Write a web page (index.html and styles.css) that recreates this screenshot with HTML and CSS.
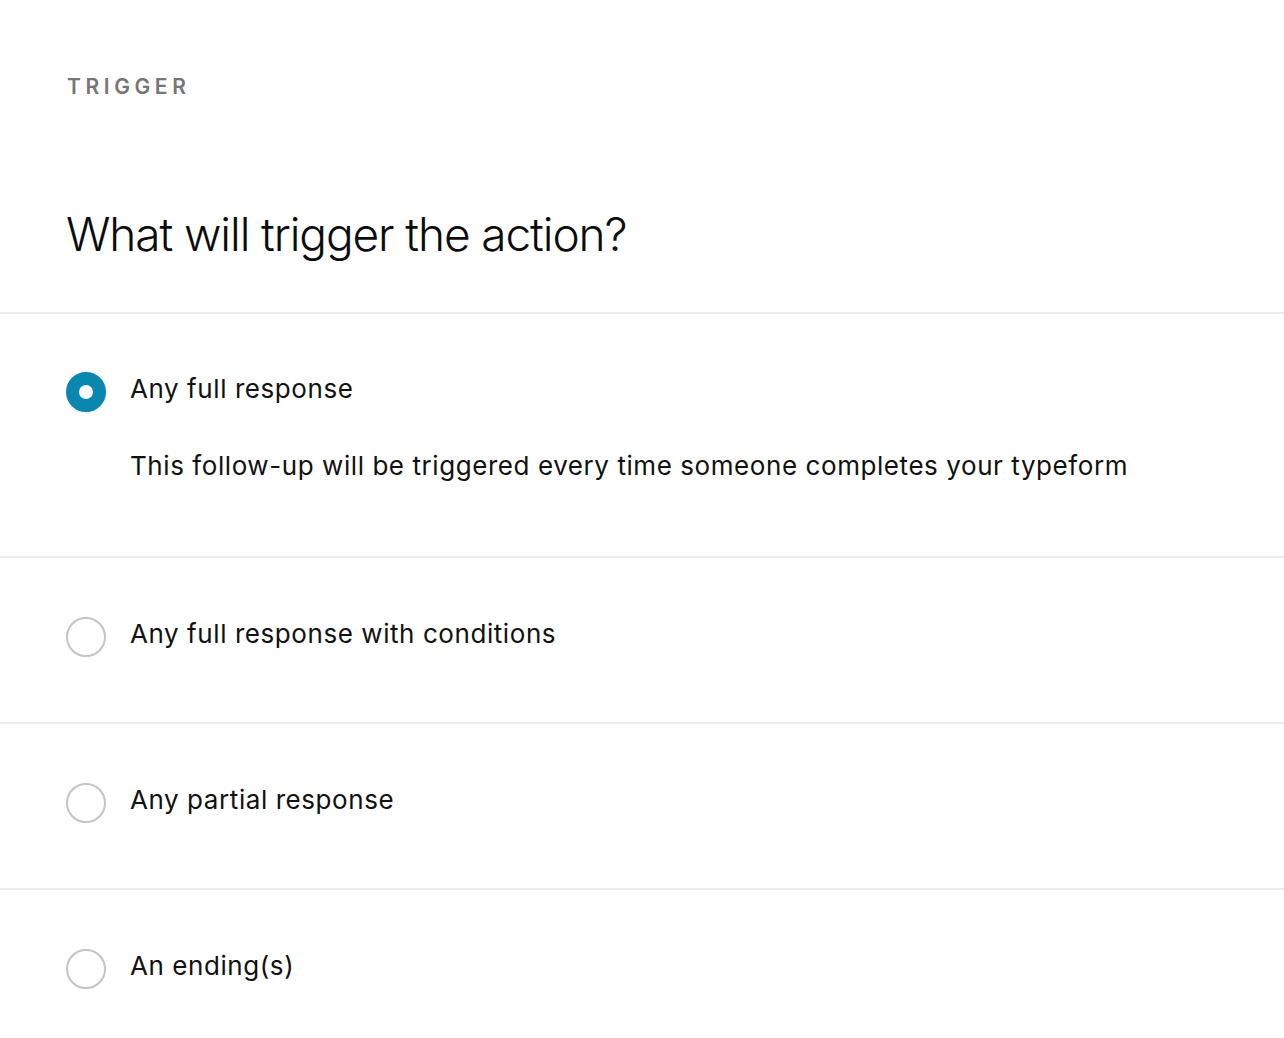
FILE: index.html
```html
<!DOCTYPE html>
<html lang="en">
<head>
    <meta charset="UTF-8">
    <meta name="viewport" content="width=device-width, initial-scale=1.0">
    <title>Trigger</title>
    <link rel="stylesheet" href="styles.css">
</head>
<body>
    <div class="header">
        <div class="eyebrow">TRIGGER</div>
        <h1 class="title">What will trigger the action?</h1>
    </div>

    <div class="options">
        <label class="option first">
            <span class="radio checked"></span>
            <span class="option-body">
                <span class="option-label">Any full response</span>
                <span class="option-desc">This follow-up will be triggered every time someone completes your typeform</span>
            </span>
        </label>
        <label class="option">
            <span class="radio"></span>
            <span class="option-body">
                <span class="option-label">Any full response with conditions</span>
            </span>
        </label>
        <label class="option">
            <span class="radio"></span>
            <span class="option-body">
                <span class="option-label">Any partial response</span>
            </span>
        </label>
        <label class="option">
            <span class="radio"></span>
            <span class="option-body">
                <span class="option-label">An ending(s)</span>
            </span>
        </label>
    </div>
</body>
</html>
```

FILE: styles.css
```css
body {
    margin: 0;
    padding: 0;
    font-family: 'Inter', 'Noto Sans', sans-serif;
    background: #ffffff;
    color: #111111;
    overflow: hidden;
}

.header {
    padding: 75px 67px 50px;
    border-bottom: 2px solid #ececec;
}

.eyebrow {
    font-size: 21px;
    line-height: 24px;
    font-weight: 600;
    letter-spacing: 4.6px;
    color: #767676;
}

.title {
    margin: 107px 0 0 -1px;
    font-size: 46px;
    line-height: 56px;
    font-weight: 300;
    color: #0c0c0c;
    letter-spacing: -1.1px;
}

.option {
    display: flex;
    align-items: flex-start;
    gap: 24px;
    padding: 59px 66px 65px;
    border-bottom: 2px solid #ececec;
    cursor: pointer;
}

.option.first {
    padding-top: 58px;
    padding-bottom: 73px;
}

.radio {
    flex: none;
    width: 40px;
    height: 40px;
    border-radius: 50%;
    border: 2px solid #c4c4c4;
    box-sizing: border-box;
    display: flex;
    align-items: center;
    justify-content: center;
}

.radio.checked {
    background: #0a87af;
    border-color: #0a87af;
}

.radio.checked::after {
    content: '';
    width: 14px;
    height: 14px;
    border-radius: 50%;
    background: #ffffff;
}

.option-body {
    display: flex;
    flex-direction: column;
}

.option-label,
.option-desc {
    font-size: 26px;
    line-height: 34px;
    letter-spacing: 0.57px;
    color: #111111;
}

.option-desc {
    margin-top: 43px;
}
```
